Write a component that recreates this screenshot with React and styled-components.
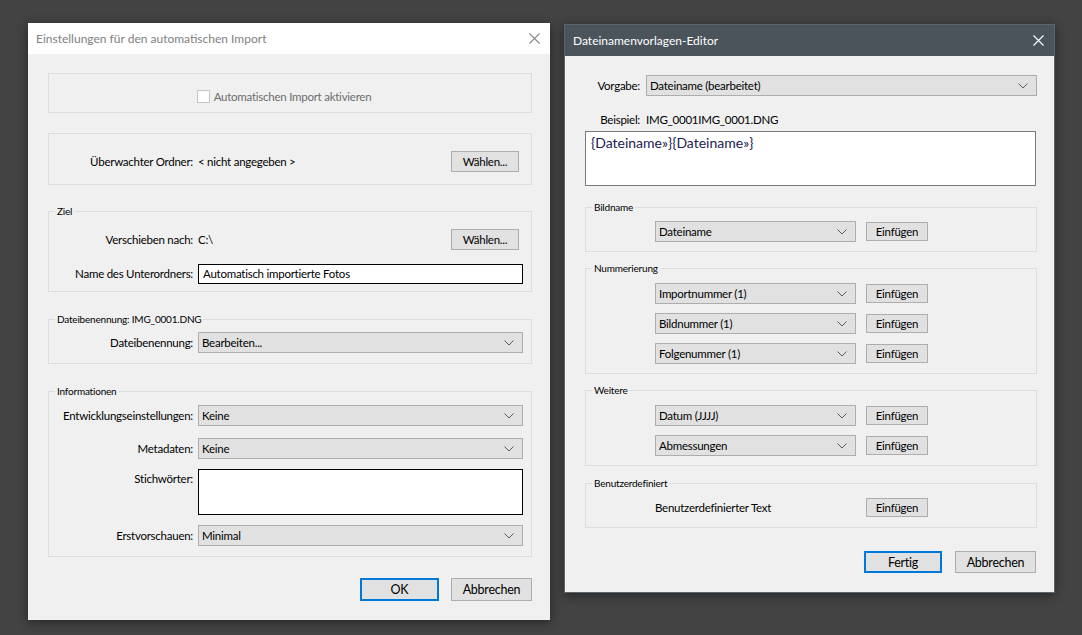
import styled, { createGlobalStyle } from "styled-components";

const GlobalStyle = createGlobalStyle`
  html, body {
    margin: 0;
    padding: 0;
    background: #434343;
  }
  body {
    font-family: Lato, "Liberation Sans", sans-serif;
    font-size: 11.5px;
    letter-spacing: -0.25px;
    color: #000;
  }
`;

const Desktop = styled.div`
  position: relative;
  width: 1082px;
  height: 635px;
  overflow: hidden;
  background: #434343;
`;

/* windows sit on a free desktop, so their place is part of the content */
const Window = styled.div`
  position: absolute;
  left: ${(p) => p.$left}px;
  top: ${(p) => p.$top}px;
  width: ${(p) => p.$width}px;
  height: ${(p) => p.$height}px;
  box-sizing: border-box;
  background: #f0f0f0;
  border: ${(p) => (p.$active ? "1px solid #5c656c" : "none")};
  box-shadow: 0 2px 10px rgba(0, 0, 0, 0.45);
  display: flex;
  flex-direction: column;
`;

const TitleBar = styled.div`
  height: 31px;
  flex: none;
  display: flex;
  align-items: center;
  justify-content: space-between;
  padding: 0 10px 0 8px;
  background: ${(p) => (p.$active ? "#4b545b" : "#ffffff")};
  color: ${(p) => (p.$active ? "#ffffff" : "#808080")};
  font-size: 12px;
  letter-spacing: 0;
`;

const CloseIcon = ({ color }) => (
  <svg width="11" height="11" viewBox="0 0 11 11">
    <path d="M0.5 0.5 L10.5 10.5 M10.5 0.5 L0.5 10.5" stroke={color} strokeWidth="1.1" fill="none" />
  </svg>
);

const Body = styled.div`
  flex: 1;
  display: flex;
  flex-direction: column;
  padding: 19px ${(p) => p.$pr}px 0 20px;
`;

const Group = styled.div`
  position: relative;
  margin-top: ${(p) => p.$mt || 0}px;
  border: 1px solid #dcdcdc;
  padding: ${(p) => p.$pad};
  display: flex;
  flex-direction: column;
  gap: ${(p) => p.$gap || 0}px;
`;

const Legend = styled.span`
  position: absolute;
  top: -7px;
  left: 6px;
  padding: 0 2px;
  background: #f0f0f0;
  font-size: 10px;
  letter-spacing: -0.2px;
  line-height: 13px;
`;

const FormRow = styled.div`
  display: grid;
  grid-template-columns: ${(p) => p.$label}px 1fr;
  column-gap: ${(p) => p.$gap || 5}px;
  align-items: ${(p) => (p.$top ? "start" : "center")};
  padding-right: ${(p) => p.$pr || 0}px;
  margin-top: ${(p) => p.$mt || 0}px;
  min-height: 21px;
`;

const Label = styled.span`
  text-align: right;
  white-space: nowrap;
  padding-top: ${(p) => (p.$top ? 3 : 0)}px;
`;

const ValueCell = styled.div`
  display: flex;
  align-items: center;
`;

const SelectBox = styled.div`
  box-sizing: border-box;
  height: 21px;
  width: ${(p) => (p.$w ? `${p.$w}px` : "100%")};
  background: #e1e1e1;
  border: 1px solid #adadad;
  display: flex;
  align-items: center;
  justify-content: space-between;
  padding: 0 8px 0 3px;
`;

const Chevron = () => (
  <svg width="10" height="6" viewBox="0 0 10 6">
    <path d="M0.5 0.5 L5 5 L9.5 0.5" stroke="#5a5a5a" strokeWidth="1" fill="none" />
  </svg>
);

const Select = ({ children, w }) => (
  <SelectBox $w={w}>
    <span>{children}</span>
    <Chevron />
  </SelectBox>
);

const Button = styled.div`
  box-sizing: border-box;
  flex: none;
  width: ${(p) => p.$w}px;
  height: ${(p) => p.$h || 21}px;
  margin-left: ${(p) => (p.$push ? "auto" : "0")};
  margin-right: ${(p) => p.$mr || 0}px;
  background: #e1e1e1;
  border: ${(p) => (p.$default ? "2px solid #0078d7" : "1px solid #adadad")};
  display: flex;
  align-items: center;
  justify-content: center;
  font-size: ${(p) => p.$fs || 11.5}px;
`;

const TextInput = styled.div`
  box-sizing: border-box;
  height: ${(p) => p.$h || 20}px;
  width: 100%;
  background: #fff;
  border: 1px solid #000;
  display: flex;
  align-items: ${(p) => (p.$multi ? "flex-start" : "center")};
  padding: 0 4px;
`;

const CheckRow = styled.div`
  height: 13px;
  display: flex;
  align-items: center;
  justify-content: center;
  gap: 4px;
  color: #6d6d6d;
  padding-right: 12px;
`;

const CheckBox = styled.span`
  box-sizing: border-box;
  width: 13px;
  height: 13px;
  background: #fff;
  border: 1px solid #c4c4c4;
`;

const Footer = styled.div`
  margin-top: ${(p) => p.$mt}px;
  display: flex;
  justify-content: flex-end;
  gap: ${(p) => p.$gap}px;
  padding-right: ${(p) => p.$pr || 0}px;
`;

const TemplateRow = styled.div`
  display: flex;
  align-items: center;
  gap: 10px;
  padding-left: 69px;
  height: 21px;
`;

const PlainText = styled.span`
  width: 201px;
  flex: none;
`;

const Example = styled.div`
  margin-top: 16px;
  display: grid;
  grid-template-columns: 55px 1fr;
  column-gap: 6px;
  height: 14px;
  align-items: center;
`;

const TemplateArea = styled.div`
  box-sizing: border-box;
  margin-top: 5px;
  margin-right: 1px;
  height: 55px;
  background: #fff;
  border: 1px solid #7a7a7a;
  padding: 2px 5px;
  font-size: 14px;
  letter-spacing: 0;
  color: #1c2050;
`;

function ImportSettings() {
  return (
    <Window $left={28} $top={23} $width={522} $height={597}>
      <TitleBar>
        <span>Einstellungen für den automatischen Import</span>
        <CloseIcon color="#8a8a8a" />
      </TitleBar>
      <Body $pr={18}>
        <Group $pad="16px 0 9px">
          <CheckRow>
            <CheckBox />
            <span>Automatischen Import aktivieren</span>
          </CheckRow>
        </Group>

        <Group $mt={20} $pad="17px 0 12px">
          <FormRow $label={144} $pr={8}>
            <Label>Überwachter Ordner:</Label>
            <ValueCell>
              <span>&lt; nicht angegeben &gt;</span>
              <Button $w={68} $push $mr={4}>Wählen...</Button>
            </ValueCell>
          </FormRow>
        </Group>

        <Group $mt={26} $pad="17px 0 7px" $gap={13}>
          <Legend>Ziel</Legend>
          <FormRow $label={144} $pr={8}>
            <Label>Verschieben nach:</Label>
            <ValueCell>
              <span>C:\</span>
              <Button $w={68} $push $mr={4}>Wählen...</Button>
            </ValueCell>
          </FormRow>
          <FormRow $label={144} $pr={8}>
            <Label>Name des Unterordners:</Label>
            <TextInput>Automatisch importierte Fotos</TextInput>
          </FormRow>
        </Group>

        <Group $mt={27} $pad="12px 0 10px">
          <Legend>Dateibenennung: IMG_0001.DNG</Legend>
          <FormRow $label={144} $pr={8}>
            <Label>Dateibenennung:</Label>
            <Select>Bearbeiten...</Select>
          </FormRow>
        </Group>

        <Group $mt={27} $pad="13px 0 10px">
          <Legend>Informationen</Legend>
          <FormRow $label={144} $pr={8}>
            <Label>Entwicklungseinstellungen:</Label>
            <Select>Keine</Select>
          </FormRow>
          <FormRow $label={144} $pr={8} $mt={12}>
            <Label>Metadaten:</Label>
            <Select>Keine</Select>
          </FormRow>
          <FormRow $label={144} $pr={8} $mt={10} $top>
            <Label $top>Stichwörter:</Label>
            <TextInput $h={46} $multi />
          </FormRow>
          <FormRow $label={144} $pr={8} $mt={10}>
            <Label>Erstvorschauen:</Label>
            <Select>Minimal</Select>
          </FormRow>
        </Group>

        <Footer $mt={21} $gap={12}>
          <Button $w={79} $h={23} $default $fs={12.5}>OK</Button>
          <Button $w={81} $h={23} $fs={12.5}>Abbrechen</Button>
        </Footer>
      </Body>
    </Window>
  );
}

const numbering = ["Importnummer (1)", "Bildnummer (1)", "Folgenummer (1)"];
const others = ["Datum (JJJJ)", "Abmessungen"];

function TemplateEditor() {
  return (
    <Window $left={564} $top={24} $width={491} $height={569} $active>
      <TitleBar $active>
        <span>Dateinamenvorlagen-Editor</span>
        <CloseIcon color="#ffffff" />
      </TitleBar>
      <Body $pr={17}>
        <FormRow $label={55} $gap={6}>
          <Label>Vorgabe:</Label>
          <Select>Dateiname (bearbeitet)</Select>
        </FormRow>
        <Example>
          <Label>Beispiel:</Label>
          <span>IMG_0001IMG_0001.DNG</span>
        </Example>
        <TemplateArea>{"{Dateiname»}{Dateiname»}"}</TemplateArea>

        <Group $mt={21} $pad="13px 0 9px">
          <Legend>Bildname</Legend>
          <TemplateRow>
            <Select w={201}>Dateiname</Select>
            <Button $w={62} $h={19}>Einfügen</Button>
          </TemplateRow>
        </Group>

        <Group $mt={16} $pad="14px 0 9px" $gap={9}>
          <Legend>Nummerierung</Legend>
          {numbering.map((item) => (
            <TemplateRow key={item}>
              <Select w={201}>{item}</Select>
              <Button $w={62} $h={19}>Einfügen</Button>
            </TemplateRow>
          ))}
        </Group>

        <Group $mt={16} $pad="14px 0 9px" $gap={9}>
          <Legend>Weitere</Legend>
          {others.map((item) => (
            <TemplateRow key={item}>
              <Select w={201}>{item}</Select>
              <Button $w={62} $h={19}>Einfügen</Button>
            </TemplateRow>
          ))}
        </Group>

        <Group $mt={17} $pad="13px 0 9px">
          <Legend>Benutzerdefiniert</Legend>
          <TemplateRow>
            <PlainText>Benutzerdefinierter Text</PlainText>
            <Button $w={62} $h={19}>Einfügen</Button>
          </TemplateRow>
        </Group>

        <Footer $mt={23} $gap={13} $pr={1}>
          <Button $w={78} $h={22} $default $fs={12.5}>Fertig</Button>
          <Button $w={81} $h={22} $fs={12.5}>Abbrechen</Button>
        </Footer>
      </Body>
    </Window>
  );
}

export default function App() {
  return (
    <>
      <GlobalStyle />
      <Desktop>
        <ImportSettings />
        <TemplateEditor />
      </Desktop>
    </>
  );
}
